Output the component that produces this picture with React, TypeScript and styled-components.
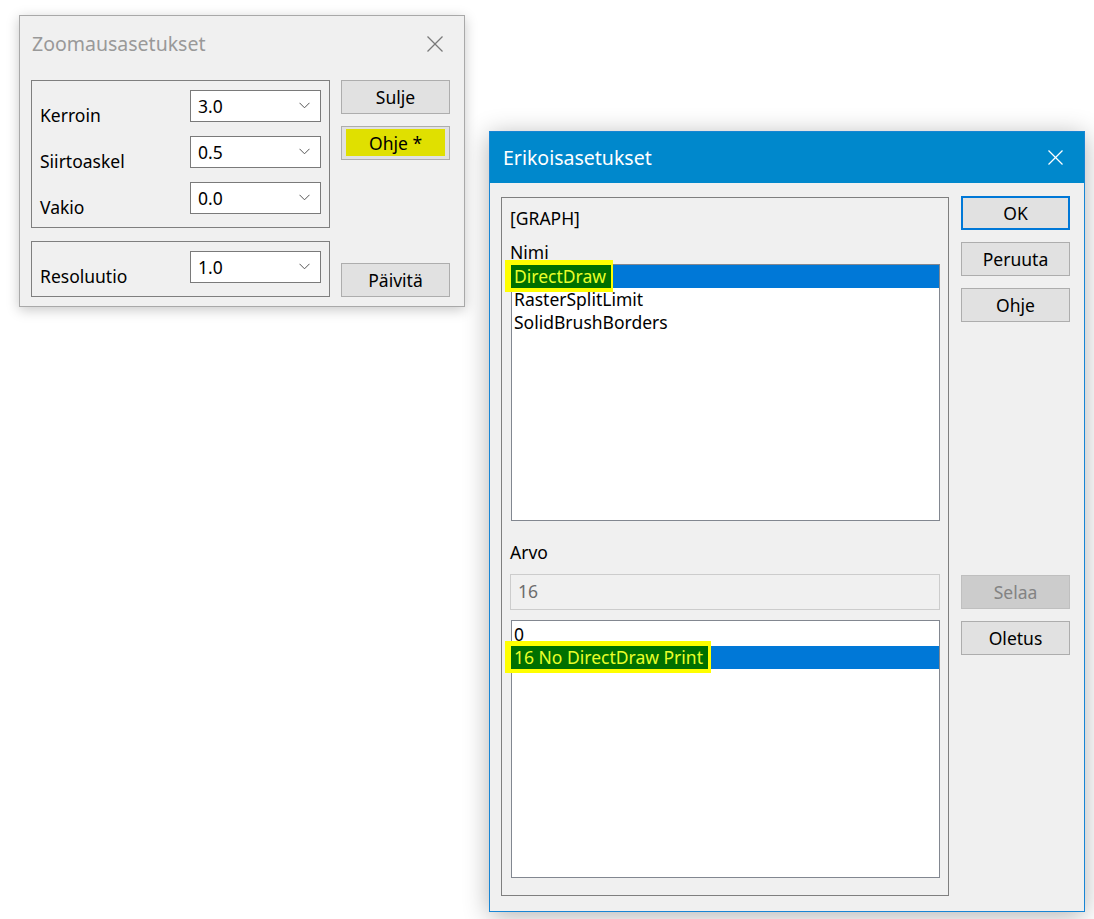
import React from "react";
import styled, { createGlobalStyle } from "styled-components";

const Global = createGlobalStyle`
  html, body { margin: 0; padding: 0; background: #ffffff; }
  body { font-family: "Noto Sans", "Open Sans", sans-serif; color: #000; }
  * { box-sizing: border-box; }
`;

const Desktop = styled.div`
  position: relative;
  width: 1094px;
  height: 919px;
  overflow: hidden;
  background: #ffffff;
`;

const Window = styled.div<{ $left: number; $top: number; $width: number; $height: number; $active?: boolean }>`
  position: absolute;
  left: ${(p) => p.$left}px;
  top: ${(p) => p.$top}px;
  width: ${(p) => p.$width}px;
  height: ${(p) => p.$height}px;
  background: #f0f0f0;
  border: 1px solid ${(p) => (p.$active ? "#1885d4" : "#a9a9a9")};
  box-shadow: ${(p) =>
    p.$active ? "0 4px 24px rgba(0,0,0,0.30)" : "0 3px 12px rgba(0,0,0,0.22)"};
  display: flex;
  flex-direction: column;
`;

const TitleBar = styled.div<{ $active?: boolean; $h: number; $padL: number; $padR: number }>`
  height: ${(p) => p.$h}px;
  flex: none;
  display: flex;
  align-items: center;
  justify-content: space-between;
  padding: 0 ${(p) => p.$padR}px 0 ${(p) => p.$padL}px;
  background: ${(p) => (p.$active ? "#0088cc" : "#f0f0f0")};
  color: ${(p) => (p.$active ? "#ffffff" : "#999999")};
  font-size: 19.5px;
  line-height: 26px;
`;

const CloseIcon = ({ color, size }: { color: string; size: number }) => (
  <svg width={size} height={size} viewBox={`0 0 ${size} ${size}`}>
    <line x1="0.5" y1="0.5" x2={size - 0.5} y2={size - 0.5} stroke={color} strokeWidth="1.2" />
    <line x1={size - 0.5} y1="0.5" x2="0.5" y2={size - 0.5} stroke={color} strokeWidth="1.2" />
  </svg>
);

const ZoomBody = styled.div`
  flex: 1;
  display: grid;
  grid-template-columns: 299px 109px;
  grid-template-rows: 148px 56px;
  column-gap: 11px;
  row-gap: 13px;
  padding: 9px 0 0 11px;
`;

const GroupBox = styled.div`
  border: 1px solid #7f7f7f;
`;

const FieldGroup = styled(GroupBox)`
  display: flex;
  flex-direction: column;
  gap: 14px;
  padding: 9px 8px 0 8px;
`;

const FieldRow = styled.div`
  display: flex;
  align-items: center;
  justify-content: space-between;
  height: 32px;
`;

const FieldLabel = styled.span`
  font-size: 17.5px;
  line-height: 24px;
  padding-top: 17px;
`;

const Combo = styled.div`
  width: 131px;
  height: 32px;
  background: #ffffff;
  border: 1px solid #7a7a7a;
  display: flex;
  align-items: center;
  justify-content: space-between;
  padding: 0 10px 1px 7px;
  font-size: 17.5px;
`;

const Chevron = () => (
  <svg width="11" height="7" viewBox="0 0 11 7">
    <polyline points="0.5,0.8 5.5,5.8 10.5,0.8" fill="none" stroke="#555" strokeWidth="1" />
  </svg>
);

const ButtonStack = styled.div`
  display: flex;
  flex-direction: column;
  gap: 12px;
`;

const EndCell = styled.div`
  display: flex;
  flex-direction: column;
  justify-content: flex-end;
`;

const Button = styled.div<{ $default?: boolean; $disabled?: boolean; $mt?: number }>`
  width: 109px;
  height: 34px;
  flex: none;
  margin-top: ${(p) => p.$mt ?? 0}px;
  display: flex;
  align-items: center;
  justify-content: center;
  font-size: 17.5px;
  background: ${(p) => (p.$disabled ? "#cccccc" : "#e1e1e1")};
  color: ${(p) => (p.$disabled ? "#838383" : "#000")};
  border: ${(p) =>
    p.$default ? "2px solid #0078d7" : p.$disabled ? "1px solid #bfbfbf" : "1px solid #adadad"};
`;

const MarkedButtonText = styled.span`
  flex: 1;
  align-self: stretch;
  margin: 2px 4px 3px 4px;
  background: #e0e000;
  display: flex;
  align-items: center;
  justify-content: center;
`;

const SpecialBody = styled.div`
  flex: 1;
  display: grid;
  grid-template-columns: 448px 109px;
  column-gap: 12px;
  padding: 14px 0 15px 11px;
`;

const MainGroup = styled(GroupBox)`
  display: flex;
  flex-direction: column;
  padding: 8px 8px 17px 8px;
`;

const Caption = styled.div<{ $mt?: number }>`
  font-size: 17.5px;
  line-height: 24px;
  margin-top: ${(p) => p.$mt ?? 0}px;
`;

const ListBox = styled.div<{ $h: number; $mt?: number; $pt?: number }>`
  height: ${(p) => p.$h}px;
  margin-top: ${(p) => p.$mt ?? 0}px;
  margin-left: 1px;
  background: #ffffff;
  border: 1px solid #828790;
  padding-top: ${(p) => p.$pt ?? 0}px;
  overflow: visible;
`;

const ListItem = styled.div<{ $selected?: boolean }>`
  height: 23px;
  line-height: 23px;
  font-size: 17.5px;
  padding-left: 2px;
  white-space: nowrap;
  background: ${(p) => (p.$selected ? "#0078d7" : "transparent")};
  color: ${(p) => (p.$selected ? "#ffffff" : "#000")};
  display: flex;
  align-items: stretch;
`;

const Marked = styled.span<{ $r: number }>`
  display: inline-flex;
  align-items: center;
  background: #007000;
  color: #e9ff2a;
  padding: 0 5px 1px 3px;
  border-style: solid;
  border-color: #ffff00;
  border-width: 5px ${(p) => p.$r}px 4px 6px;
  margin: -5px 0 -4px -9px;
  position: relative;
`;

const DisabledInput = styled.div`
  height: 36px;
  margin-top: 10px;
  background: #f0f0f0;
  border: 1px solid #cccccc;
  display: flex;
  align-items: center;
  padding: 0 0 2px 7px;
  font-size: 17.5px;
  color: #6d6d6d;
`;

const Page = () => (
  <Desktop>
    <Window $left={19} $top={15} $width={446} $height={292}>
      <TitleBar $h={55} $padL={12} $padR={21}>
        <span>Zoomausasetukset</span>
        <CloseIcon color="#7a7a7a" size={16} />
      </TitleBar>
      <ZoomBody>
        <FieldGroup>
          <FieldRow>
            <FieldLabel>Kerroin</FieldLabel>
            <Combo>
              <span>3.0</span>
              <Chevron />
            </Combo>
          </FieldRow>
          <FieldRow>
            <FieldLabel>Siirtoaskel</FieldLabel>
            <Combo>
              <span>0.5</span>
              <Chevron />
            </Combo>
          </FieldRow>
          <FieldRow>
            <FieldLabel>Vakio</FieldLabel>
            <Combo>
              <span>0.0</span>
              <Chevron />
            </Combo>
          </FieldRow>
        </FieldGroup>
        <ButtonStack>
          <Button>Sulje</Button>
          <Button>
            <MarkedButtonText>Ohje *</MarkedButtonText>
          </Button>
        </ButtonStack>
        <FieldGroup>
          <FieldRow>
            <FieldLabel>Resoluutio</FieldLabel>
            <Combo>
              <span>1.0</span>
              <Chevron />
            </Combo>
          </FieldRow>
        </FieldGroup>
        <EndCell>
          <Button>Päivitä</Button>
        </EndCell>
      </ZoomBody>
    </Window>

    <Window $left={489} $top={131} $width={596} $height={781} $active>
      <TitleBar $active $h={51} $padL={13} $padR={21}>
        <span>Erikoisasetukset</span>
        <CloseIcon color="#ffffff" size={15} />
      </TitleBar>
      <SpecialBody>
        <MainGroup>
          <Caption>[GRAPH]</Caption>
          <Caption $mt={10}>Nimi</Caption>
          <ListBox $h={257}>
            <ListItem $selected>
              <Marked $r={2}>DirectDraw</Marked>
            </ListItem>
            <ListItem>RasterSplitLimit</ListItem>
            <ListItem>SolidBrushBorders</ListItem>
          </ListBox>
          <Caption $mt={19}>Arvo</Caption>
          <DisabledInput>16</DisabledInput>
          <ListBox $h={258} $mt={10} $pt={2}>
            <ListItem>0</ListItem>
            <ListItem $selected>
              <Marked $r={3}>16 No DirectDraw Print</Marked>
            </ListItem>
          </ListBox>
        </MainGroup>
        <ButtonStack>
          <Button $default $mt={-1}>OK</Button>
          <Button>Peruuta</Button>
          <Button>Ohje</Button>
          <Button $disabled $mt={241}>Selaa</Button>
          <Button>Oletus</Button>
        </ButtonStack>
      </SpecialBody>
    </Window>
  </Desktop>
);

export default function App() {
  return (
    <>
      <Global />
      <Page />
    </>
  );
}
